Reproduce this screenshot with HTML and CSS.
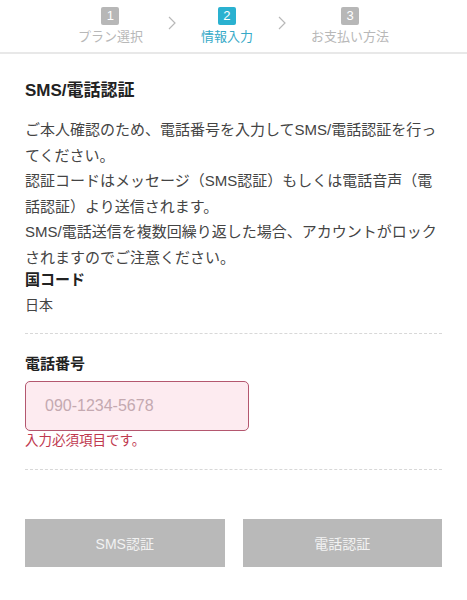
FILE: index.html
```html
<!DOCTYPE html>
<html lang="ja">
<head>
<meta charset="utf-8">
<title>SMS/電話認証</title>
<link rel="stylesheet" href="styles.css">
</head>
<body>
<header class="steps">
  <div class="step">
    <span class="num">1</span>
    <span class="label">プラン選択</span>
  </div>
  <svg class="chev" width="8" height="14" viewBox="0 0 8 14"><path d="M1 1 L7 7 L1 13" fill="none" stroke="#b8b8b8" stroke-width="1.2"/></svg>
  <div class="step active">
    <span class="num">2</span>
    <span class="label">情報入力</span>
  </div>
  <svg class="chev" width="8" height="14" viewBox="0 0 8 14"><path d="M1 1 L7 7 L1 13" fill="none" stroke="#b8b8b8" stroke-width="1.2"/></svg>
  <div class="step">
    <span class="num">3</span>
    <span class="label">お支払い方法</span>
  </div>
</header>

<main class="content">
  <h1 class="title">SMS/電話認証</h1>
  <p class="desc">ご本人確認のため、電話番号を入力してSMS/電話認証を行ってください。<br>認証コードはメッセージ（SMS認証）もしくは電話音声（電話認証）より送信されます。<br>SMS/電話送信を複数回繰り返した場合、アカウントがロックされますのでご注意ください。</p>

  <section class="field country">
    <h2 class="label">国コード</h2>
    <div class="value">日本</div>
  </section>

  <section class="field phone">
    <h2 class="label">電話番号</h2>
    <input class="input error" type="tel" placeholder="090-1234-5678">
    <div class="errmsg">入力必須項目です。</div>
  </section>

  <div class="buttons">
    <button class="btn">SMS認証</button>
    <button class="btn">電話認証</button>
  </div>
</main>
</body>
</html>
```

FILE: styles.css
```css
* { box-sizing: border-box; }
html, body { margin: 0; padding: 0; background: #fff; }
body {
  font-family: "Liberation Sans", "Noto Sans CJK JP", sans-serif;
  color: #333;
  width: 467px;
}
.steps {
  height: 54px;
  border-bottom: 2px solid #e8e8e8;
  display: flex;
  justify-content: center;
  align-items: flex-start;
  gap: 25px;
  padding-top: 7px;
}
.step {
  display: flex;
  flex-direction: column;
  align-items: center;
}
.step .num {
  width: 18px;
  height: 18px;
  border-radius: 2px;
  background: #b7b7b7;
  color: #fff;
  font-size: 13px;
  line-height: 18px;
  text-align: center;
}
.step .label {
  margin-top: 4px;
  font-size: 13px;
  line-height: 16px;
  color: #b8b8b8;
  white-space: nowrap;
}
.step.active .num { background: #2ab1d0; }
.step.active .label { color: #35a9c7; }
.chev { margin-top: 9px; }

.content {
  padding: 0 25px;
}
.title {
  margin: 25px 0 0;
  font-size: 17px;
  line-height: 24px;
  font-weight: bold;
  color: #222;
}
.desc {
  margin: 14px 0 0;
  font-size: 15px;
  line-height: 25.6px;
  color: #444;
}
.field .label {
  margin: 0;
  font-size: 15px;
  line-height: 18px;
  font-weight: bold;
  color: #222;
}
.country {
  margin-top: 0;
  padding-bottom: 18px;
  border-bottom: 1px dashed #d8d8d8;
}
.country .value {
  margin-top: 6px;
  font-size: 14px;
  line-height: 20px;
  color: #444;
}
.phone {
  padding-top: 21px;
  padding-bottom: 19px;
  border-bottom: 1px dashed #d8d8d8;
}
.input {
  display: block;
  margin-top: 8px;
  width: 224px;
  height: 50px;
  border: 1.5px solid #b4576f;
  border-radius: 5px;
  background: #fdebf0;
  padding: 0 19px;
  font-family: "Liberation Sans", "Noto Sans CJK JP", sans-serif;
  font-size: 16px;
  color: #333;
  outline: none;
}
.input::placeholder { color: #c4a9b0; }
.errmsg {
  margin-top: 1px;
  font-size: 13.5px;
  line-height: 18px;
  color: #c0394f;
}
.buttons {
  margin-top: 49px;
  display: flex;
  gap: 18px;
}
.btn {
  flex: 1;
  height: 48px;
  border: none;
  background: #b9b9b9;
  color: #f2f2f2;
  font-family: "Liberation Sans", "Noto Sans CJK JP", sans-serif;
  font-size: 14px;
}
```
